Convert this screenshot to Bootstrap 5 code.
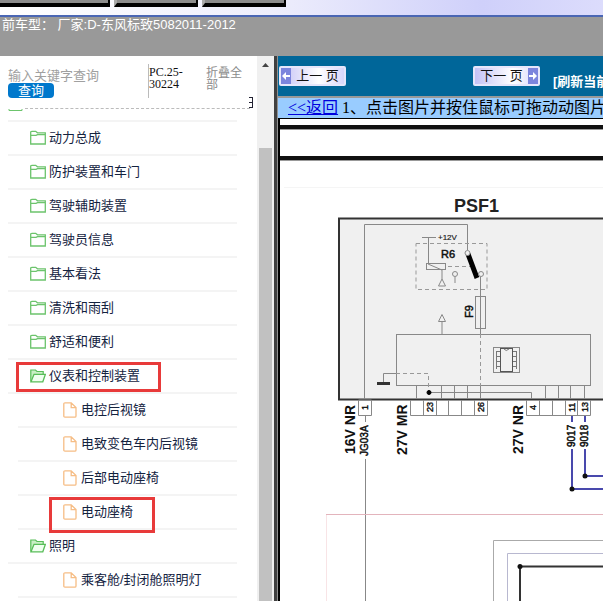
<!DOCTYPE html>
<html lang="zh-CN">
<head>
<meta charset="utf-8">
<meta name="viewport" content="width=device-width, initial-scale=1">
<title>电路图查询</title>
<link href="https://cdn.jsdelivr.net/npm/bootstrap@5.3.0/dist/css/bootstrap.min.css" rel="stylesheet">
<style>
body{font:13px/16px "Liberation Sans","Noto Sans CJK SC",sans-serif;background:#fff}
.serif-cn{font-family:"Liberation Serif","Noto Sans CJK SC",serif}
.top-strip{height:17px;background:linear-gradient(90deg,#fff 0,#eeeefc 45%,#cfd0fa 80%,#dcdcfc 100%);border-bottom:2px solid #4a66b4;gap:4px}
.menu-tab{height:7px;width:84px;padding:0;background:#8c8c8c;border:0;border-left:3px solid #aaa;border-bottom:4px solid #000;border-right:2px solid #000}
.menu-tab:first-child{width:110px;border-left:0}
.model-bar{height:39px;background:#999;color:#fff;padding-left:2px;white-space:pre}
.side-pane{width:257px}
.search-head{height:52px;padding:8px 0 0 8px}
.search-form{width:140px;padding-top:5px}
.key-input{font-size:13px;line-height:14px;height:14px;color:#333}
.key-input::placeholder{color:#a0a0a0;opacity:1}
.query-btn{width:46px;height:15px;border-radius:4px;background:#0078cc;color:#fff;font-size:13px;line-height:14px;display:block}
.code-cell{width:50px;height:34px;border-left:1px solid #bbb;font-size:12px;line-height:12px;padding-top:2px;color:#111}
.fold-link{width:40px;margin-left:8px;font-size:12px;line-height:12px;padding-top:3px;color:#8c8c8c}
.head-rule{height:1px;margin:0 7px 0 25px;border-top:1px dashed #bbb}
.cut-mark{right:4px;top:41px;width:4px;height:11px;border:1px solid #223;border-left:0}
.cut-mark::after{content:"";display:block;height:1px;background:#223;margin-top:4px}
.tree-list{margin:0 20px 0 8px}
.tree-row{height:34px;border-bottom:2px solid #f4f4f4;padding-left:22px;color:#14233f}
.tree-row a{color:inherit;text-decoration:none;gap:3px}
.tree-row.cut{height:13px;padding-left:0;overflow:hidden}
.tree-sub .tree-row{margin-left:10px;padding-left:45px}
.tree-sub .tree-row a{gap:4px}
.red-frame{border:3px solid #e83a3a;pointer-events:none;left:8px;top:2px;width:145px;height:30px}
.red-frame.leaf{left:31px;top:1px;width:106px;height:36px;z-index:2}
.scroll-rail{width:17px;background:#f0f0f0;padding:5px 2px 0}
.scroll-up{height:87px}
.scroll-thumb{background:#c1c1c1}
.pane-split{width:4px;background:#404040;border-right:1px solid #909090}
.view-pane{min-width:0}
.page-nav{height:40px;background:#006699;padding-left:1px}
.page-btn{width:67px;height:20px;border:2px solid #e6e6fb;border-radius:2px;background:linear-gradient(90deg,#c4c2f6,#fff 60%,#d8d6fb);font-size:13px;line-height:16px;padding:0;color:#111;overflow:hidden}
.page-btn svg{width:10px;flex:none}
.next-btn{margin-left:127px}
.refresh-link{color:#fff;font-weight:700;margin:11px 0 0 13px;text-decoration:none}
.tip-bar{height:22px;border-top:2px solid #999;background:#99ccff;font-size:16px;line-height:20px;padding-left:10px;color:#000;overflow:hidden}
.tip-bar a{color:#0000dd;text-decoration:underline}
.draw-area{border:solid #000;border-width:1px 0 0 2px;background:#fff}
.thick-rule{border-top:4px solid #111;height:5px;border-bottom:1px solid #999}
.rule-a{margin-top:6px}
.rule-b{margin-top:26px}
.draw-area svg{display:block}
</style>
<script src="https://cdn.jsdelivr.net/npm/bootstrap@5.3.0/dist/js/bootstrap.bundle.min.js"></script>
</head>
<body class="vh-100 d-flex flex-column overflow-hidden">
<svg class="d-none">
<symbol id="folder" viewBox="0 0 16 16"><path d="M.7 14V2L2 1.300H5.700L7.500 2.800H15.300V14H.7ZM.7 5.400H6L7.500 4.600H15.300" fill="none" stroke="#6cc46c" stroke-width="1.300"/></symbol>
<symbol id="folder-open" viewBox="0 0 16 16"><path d="M.8 13.500V2H5.500L7 3.500H13.200V6" fill="#c9efc5" stroke="#58bd58" stroke-width="1.200"/><path d="M1 13.800L4 6.300H15.400L12.800 13.800Z" fill="#f0fff0" stroke="#58bd58" stroke-width="1.300"/></symbol>
<symbol id="page" viewBox="0 0 14 16"><path d="M.8 2Q.8.8 2 .8H8.200L13 5.600V14Q13 15.200 11.800 15.200H2Q.8 15.200.8 14ZM8.200.8V5.600H13" fill="none" stroke="#f6bd85" stroke-width="1.300"/></symbol>
</svg>
<nav class="top-strip d-flex flex-shrink-0" aria-label="主菜单">
<button class="menu-tab" aria-label="菜单一"></button><button class="menu-tab" aria-label="菜单二"></button><button class="menu-tab" aria-label="菜单三"></button>
</nav>
<header class="model-bar flex-shrink-0">前车型： 厂家:D-东风标致5082011-2012</header>
<main class="d-flex flex-grow-1 overflow-hidden">
<aside class="side-pane flex-shrink-0 position-relative overflow-hidden">
<div class="search-head d-flex">
<form class="search-form"><input class="key-input w-100 border-0 p-0 d-block" type="text" aria-label="关键字" placeholder="输入关键字查询"><button class="query-btn border-0 p-0" type="button">查询</button></form>
<div class="code-cell serif-cn">PC.25-<br>30224</div>
<a href="#" class="fold-link text-decoration-none">折叠全部</a>
</div>
<span class="cut-mark position-absolute"></span>
<div class="head-rule"></div>
<ul class="tree-list list-unstyled">
<li><div class="tree-row cut d-flex"><svg width="15" height="3" viewBox="0 0 15 3"><path d="M1 0V1.500H14V0" fill="none" stroke="#6cc46c"/></svg></div></li>
<li><div class="tree-row d-flex align-items-center"><a href="#" class="d-flex align-items-center"><svg width="16" height="16"><use href="#folder"/></svg>动力总成</a></div></li>
<li><div class="tree-row d-flex align-items-center"><a href="#" class="d-flex align-items-center"><svg width="16" height="16"><use href="#folder"/></svg>防护装置和车门</a></div></li>
<li><div class="tree-row d-flex align-items-center"><a href="#" class="d-flex align-items-center"><svg width="16" height="16"><use href="#folder"/></svg>驾驶辅助装置</a></div></li>
<li><div class="tree-row d-flex align-items-center"><a href="#" class="d-flex align-items-center"><svg width="16" height="16"><use href="#folder"/></svg>驾驶员信息</a></div></li>
<li><div class="tree-row d-flex align-items-center"><a href="#" class="d-flex align-items-center"><svg width="16" height="16"><use href="#folder"/></svg>基本看法</a></div></li>
<li><div class="tree-row d-flex align-items-center"><a href="#" class="d-flex align-items-center"><svg width="16" height="16"><use href="#folder"/></svg>清洗和雨刮</a></div></li>
<li><div class="tree-row d-flex align-items-center"><a href="#" class="d-flex align-items-center"><svg width="16" height="16"><use href="#folder"/></svg>舒适和便利</a></div></li>
<li><div class="tree-row d-flex align-items-center position-relative"><a href="#" class="d-flex align-items-center"><svg width="16" height="16"><use href="#folder-open"/></svg>仪表和控制装置</a><span class="red-frame position-absolute"></span></div>
<ul class="tree-sub list-unstyled">
<li><div class="tree-row d-flex align-items-center"><a href="#" class="d-flex align-items-center"><svg width="14" height="16"><use href="#page"/></svg>电控后视镜</a></div></li>
<li><div class="tree-row d-flex align-items-center"><a href="#" class="d-flex align-items-center"><svg width="14" height="16"><use href="#page"/></svg>电致变色车内后视镜</a></div></li>
<li><div class="tree-row d-flex align-items-center"><a href="#" class="d-flex align-items-center"><svg width="14" height="16"><use href="#page"/></svg>后部电动座椅</a></div></li>
<li><div class="tree-row d-flex align-items-center position-relative"><a href="#" class="d-flex align-items-center"><svg width="14" height="16"><use href="#page"/></svg>电动座椅</a><span class="red-frame leaf position-absolute"></span></div></li>
</ul></li>
<li><div class="tree-row d-flex align-items-center"><a href="#" class="d-flex align-items-center"><svg width="16" height="16"><use href="#folder-open"/></svg>照明</a></div>
<ul class="tree-sub list-unstyled">
<li><div class="tree-row d-flex align-items-center"><a href="#" class="d-flex align-items-center"><svg width="14" height="16"><use href="#page"/></svg>乘客舱/封闭舱照明灯</a></div></li>
</ul></li>
</ul>
</aside>
<div class="scroll-rail flex-shrink-0 d-flex flex-column" aria-hidden="true"><svg class="scroll-up w-100 flex-shrink-0" viewBox="0 0 13 87"><path d="M3 6L6.500 2L10 6Z" fill="#444"/></svg><div class="scroll-thumb flex-grow-1"></div></div>
<div class="pane-split flex-shrink-0"></div>
<section class="view-pane flex-grow-1 d-flex flex-column overflow-hidden">
<div class="page-nav d-flex align-items-center flex-shrink-0">
<button class="page-btn d-flex flex-shrink-0"><svg height="16" viewBox="0 0 10 16"><path d="M0 0H10V16H0Z" fill="#7c85dd"/><path d="M1 8L5 4V7H9V9H5V12Z" fill="#fff"/></svg><span class="flex-grow-1">上一 页</span></button>
<button class="page-btn next-btn d-flex flex-shrink-0"><span class="flex-grow-1">下一 页</span><svg height="16" viewBox="0 0 10 16"><path d="M0 0H10V16H0Z" fill="#7c85dd"/><path d="M9 8L5 4V7H1V9H5V12Z" fill="#fff"/></svg></button>
<a href="#" class="refresh-link text-nowrap">[刷新当前页]</a>
</div>
<div class="tip-bar serif-cn text-nowrap flex-shrink-0"><a href="#">&lt;&lt;返回</a> 1、点击图片并按住鼠标可拖动动图片</div>
<div class="draw-area flex-grow-1 overflow-hidden">
<div class="thick-rule rule-a"></div>
<div class="thick-rule rule-b"></div>
<svg width="640" height="480" viewBox="280 161 640 480" fill="none" stroke="#888" stroke-width="1" font-family="Liberation Sans, Arial, sans-serif">
<path d="M284 187.500H921" stroke="#f5f5f5"/>
<rect x="339" y="218.500" width="540" height="181" fill="#f0f0f0" stroke="#333" stroke-width="2"/>
<path d="M364.500 399V224.500H467.500V250M422 237.500H436M428.500 237V263M442 270V279M438.500 286H445.500L442 279ZM455 277V283M480.500 277V334M442 334V321M438.500 321.500H445.500L442 314.500Z"/>
<path d="M416 243.500H487V289.500H416ZM448 266.500H472" stroke-dasharray="4 3" stroke="#999"/>
<rect x="426.500" y="263.500" width="19" height="6"/><path d="M428 264L442 270"/>
<circle cx="455" cy="274" r="2.500"/>
<rect x="475.500" y="296.500" width="10" height="32"/>
<path d="M468 254L477 278" stroke="#000" stroke-width="5"/>
<circle cx="467.500" cy="253" r="2.500" fill="#f0f0f0"/><circle cx="481" cy="274" r="2.500" fill="#f0f0f0"/>
<rect x="396.500" y="334.500" width="194" height="51"/>
<path d="M480.500 334V399M396 373.500H428.500V392" stroke-dasharray="4 3" stroke="#999"/>
<path d="M396 373.500H383.500V382"/><path d="M377 383.500H390" stroke="#333" stroke-width="3"/>
<path d="M416.500 386V399M441.500 386V399M454.500 386V399M467.500 386V399M480.500 386V399M545.500 386V399M558.500 386V399M570.500 386V399M584.500 386V399M428 392.500H531.500V399"/>
<circle cx="429" cy="392.500" r="2" fill="#000" stroke="#000"/>
<rect x="493.500" y="347.500" width="26" height="25"/><rect x="500.500" y="348.500" width="12" height="23" stroke="#555"/>
<path d="M504 349Q506 352 509 349M496 351.500H500M496 356.500H500M496 361.500H500M496 366.500H500M513 351.500H517M513 356.500H517M513 361.500H517M513 366.500H517M496.500 351V369M516.500 351V369" stroke="#777"/>
<path d="M358.500 400H371.500V415.500H358.500ZM410.500 400V415.500H487.500V400M423.500 400V415M436.500 400V415M448.500 400V415M461.500 400V415M474.500 400V415M526.500 400V415.500H590.500V400M539.500 400V415M552.500 400V415M565.500 400V415M577.500 400V415"/>
<path d="M365.500 416V422M365.500 459V641"/>
<path d="M326.500 641V514.500" stroke="#f8e4e6"/><path d="M326 514.500H921" stroke="#e3b4bc"/>
<path d="M493.500 641V540.500H921" stroke="#aaa"/><path d="M507.500 641V553.500H921" stroke="#b8b8d0"/>
<path d="M520 641V566.500H921" stroke="#333" stroke-width="2"/>
<path d="M572 416V422M572 449V489H921M585 416V422M585 449V476H921" stroke="#4949ad" stroke-width="2"/>
<g fill="#111" stroke="none"><circle cx="520" cy="566.500" r="2.500"/><circle cx="572" cy="489" r="2.500"/><circle cx="585" cy="476" r="2.500"/>
<text x="454" y="212" font-size="18" font-weight="700" fill="#222">PSF1</text>
<text x="438" y="240" font-size="8" stroke="#333" stroke-width=".2">+12V</text>
<text x="441" y="258" font-size="11" stroke="#111" stroke-width=".5">R6</text>
<g font-size="11" stroke="#111" stroke-width=".5">
<text transform="translate(473 318) rotate(-90)">F9</text>
<text transform="translate(368 456) rotate(-90)" font-size="10">JG03A</text>
<text transform="translate(575 447) rotate(-90)" font-size="10">9017</text>
<text transform="translate(588 447) rotate(-90)" font-size="10">9018</text>
</g>
<g font-size="14" font-weight="700">
<text transform="translate(355 454) rotate(-90)">16V NR</text>
<text transform="translate(407 455) rotate(-90)">27V MR</text>
<text transform="translate(523 454) rotate(-90)">27V NR</text>
</g>
<g font-size="9" stroke="#111" stroke-width=".4">
<text transform="translate(368 410) rotate(-90)">1</text>
<text transform="translate(433 412) rotate(-90)">23</text>
<text transform="translate(484 412) rotate(-90)">26</text>
<text transform="translate(536 410) rotate(-90)">4</text>
<text transform="translate(575 412) rotate(-90)">11</text>
<text transform="translate(588 412) rotate(-90)">13</text>
</g></g>
</svg>
</div>
</section>
</main>
</body>
</html>
